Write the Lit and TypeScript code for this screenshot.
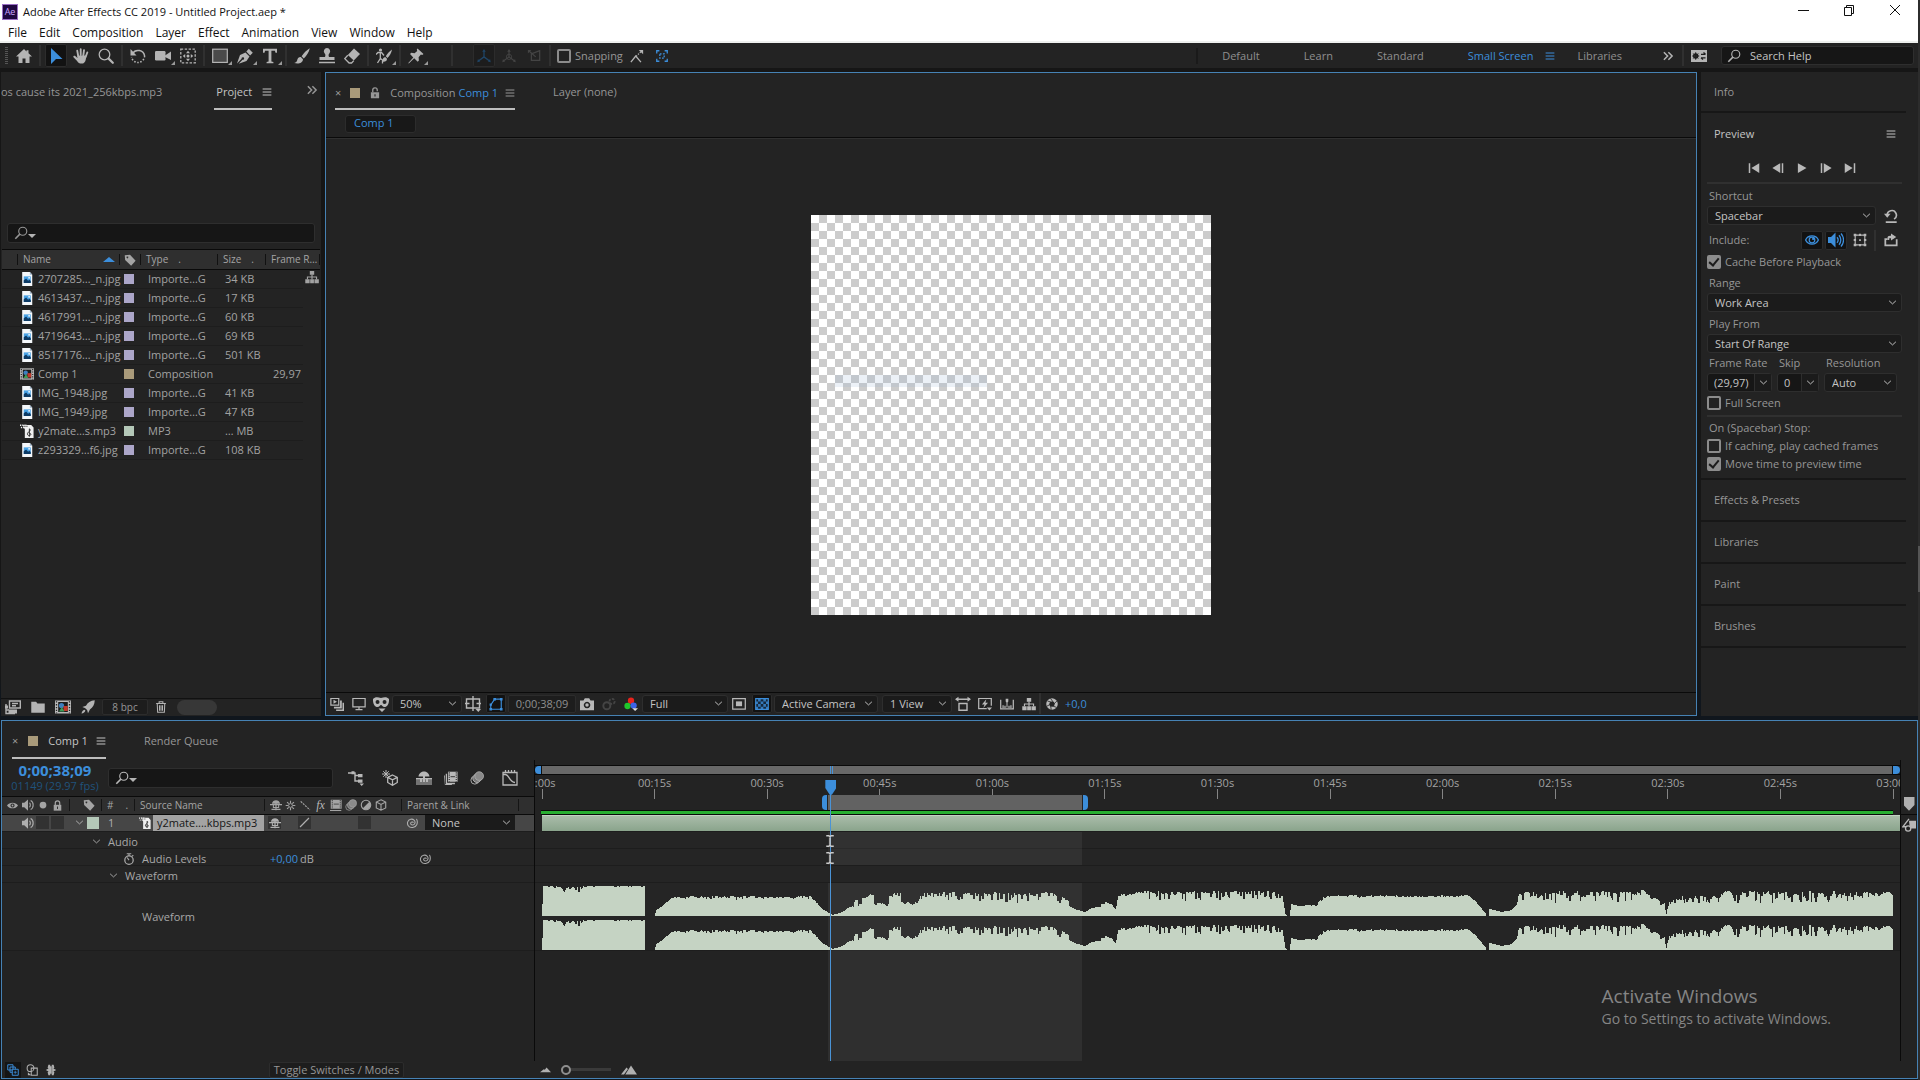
import { LitElement, html, css, svg, nothing } from "lit";
import type { TemplateResult, SVGTemplateResult } from "lit";
import { customElement, state } from "lit/decorators.js";
import { classMap } from "lit/directives/class-map.js";
import { styleMap } from "lit/directives/style-map.js";

/* ---------- icons, all on a 16 x 16 grid ---------- */

const ICONS: Record<string, SVGTemplateResult> = {
  home: svg`<path fill="currentColor" d="M8 1 0 8.600h2.500V15h4v-4.500h3V15h4V8.600H16L12.500 5.300V2.200h-2v1.200z"/>`,
  arrow: svg`<path fill="currentColor" d="M3 0v16l5-5h6.500z"/>`,
  hand: svg`<path fill="none" stroke="currentColor" stroke-width="1.900" stroke-linecap="round" d="M5.200 8 4.300 2.800M7.700 7V1.200M10.300 7.500 11 2.200M12.600 9l1.700-4.500"/><path fill="currentColor" d="M4.200 7.400h9.300l-.7 4c-.5 2.700-1.900 4.200-4.300 4.200-2 0-3.300-.8-4.400-2.600L.5 9.200c-.7-1.200.8-2.100 1.700-1.200l2.300 2z"/>`,
  zoom: svg`<circle cx="6.500" cy="6.500" r="5.300" fill="none" stroke="currentColor" stroke-width="1.300"/><path stroke="currentColor" stroke-width="2.200" stroke-linecap="round" d="m10.600 10.600 4.200 4.200"/>`,
  rotate: svg`<path fill="none" stroke="currentColor" stroke-width="1.500" d="M2.500 5.500A6.600 6.600 0 0 1 14.600 8"/><path fill="none" stroke="currentColor" stroke-width="1.500" stroke-dasharray="1.500 1.600" d="M14.600 8A6.600 6.600 0 0 1 1.500 9"/><path fill="currentColor" d="M.5 1v6.500h6z"/>`,
  camera: svg`<rect x="0" y="3" width="10.500" height="9.500" rx="1.200" fill="currentColor"/><path fill="currentColor" d="m10 7.500 6-4v8.500l-6-3z"/>`,
  panBehind: svg`<rect x=".8" y="1.200" width="14.400" height="13.600" fill="none" stroke="currentColor" stroke-width="1.300" stroke-dasharray="2.400 1.500"/><path fill="currentColor" d="m8 2.800 2 2.400H6zM8 13.200l2-2.400H6zM2.800 8l2.400-2v4zM13.200 8l-2.400-2v4z"/><circle cx="8" cy="8" r="1.500" fill="currentColor"/>`,
  rect: svg`<rect x=".7" y="1.200" width="14.600" height="13.200" fill="#4a4a4a" stroke="currentColor" stroke-width="1.200"/>`,
  pen: svg`<path fill="currentColor" d="M0 15.500 3 7l5.500-2.500 4 4L9.500 13l-7.800 2.700 3.800-4a1.300 1.300 0 1 0-.9-.9zM9.300 3.600 11.800.8l4 4-2.700 2.600z"/>`,
  type: svg`<path fill="currentColor" d="M1 .8h14v4h-1.500l-.6-2H9.400v10.600l2 .5V15.200H4.600v-1.300l2-.5V2.800H3.100l-.6 2H1z"/>`,
  brush: svg`<path fill="currentColor" d="M15.800.3c-3.500 2-6 4.700-8.200 8l2.200 2.200C12.700 7.800 14.900 4.300 15.800.3zM6.800 9c-2.600.1-3.300 1.700-3.700 3.400-.3 1.200-1 2-2.900 2.500 3.900 1.200 8.600.3 8.800-3.700z"/>`,
  stamp: svg`<path fill="currentColor" d="M8 0a3.200 3.200 0 0 1 2.300 5.400c-.9 1-.9 2-.3 3.600h5.500v3H.500V9H6c.6-1.600.6-2.600-.3-3.600A3.200 3.200 0 0 1 8 0zM0 13.700h16v1.500H0z"/>`,
  eraser: svg`<path fill="currentColor" d="M10 .5 16 6 9.800 12.600 3.800 7z"/><path fill="none" stroke="currentColor" stroke-width="1.300" d="M3.800 7.300.8 10.600l4.300 4.400H7.600l2.200-2.400"/>`,
  roto: svg`<circle cx="4.500" cy="2" r="1.600" fill="currentColor"/><path fill="none" stroke="currentColor" stroke-width="1.300" d="M0 6.500 2 4.500h3.500L8 7.500M4.300 5v5.500L1.500 15M4.500 10.500l2 1.500v3.500"/><path fill="currentColor" d="M16 1.500c-2.600 1.800-4.500 4-6.200 6.800l1.700 1.700c2.200-2.200 3.900-5 4.500-8.500zM9.200 9c-1.800.4-2.200 1.400-2.400 2.600-.2.900-.2 1.400-1 2 2.700.6 5.200.1 5.200-2.800z"/>`,
  pin: svg`<path fill="currentColor" d="M9.500.5 15.500 6l-1.300 1-1.300-.4-2.300 2.600.3 3.300-1.200 1.200-3.500-3.400L.8 15.600.3 15l5-5.600L2 6l1.300-1.200 3.300.4L9.200 2.900 8.800 1.500z"/>`,
  axis: svg`<path fill="none" stroke="currentColor" stroke-width="1.500" d="M8 2v7M8 9l-6 4.500M8 9l6 4.500"/><path fill="currentColor" d="m8 0 2 3H6zM.3 15l.8-3.500 2.400 2.700zM15.700 15l-.8-3.500-2.400 2.700z"/>`,
  axisWorld: svg`<path fill="none" stroke="currentColor" stroke-width="1.400" d="M8 2v7M8 9l-6 4.500M8 9l6 4.500"/><circle cx="8" cy="9" r="3" fill="none" stroke="currentColor"/><path fill="currentColor" d="m8 0 2 3H6zM.3 15l.8-3.500 2.400 2.700zM15.700 15l-.8-3.500-2.400 2.700z"/>`,
  axisView: svg`<path fill="none" stroke="currentColor" stroke-width="1.400" d="M5 5.500 14.500 2v11H5zM2 2l8 7"/><path fill="currentColor" d="M1 1h4L1 5z"/>`,
  snap: svg`<path fill="none" stroke="currentColor" stroke-width="1.500" d="m1 15 5.500-7 6 7"/><path fill="none" stroke="currentColor" stroke-width="1.500" stroke-dasharray="1.500 1.500" d="M7 8.500 13 2.500"/><path fill="currentColor" d="M10 1h5v5z"/>`,
  snapBox: svg`<path fill="none" stroke="currentColor" stroke-width="1.500" d="M2 5V2h3M11 2h3v3M14 11v3h-3M5 14H2v-3"/><path fill="none" stroke="currentColor" stroke-width="1.500" stroke-dasharray="2 1.500" d="M5.500 5.500h5v5h-5z"/>`,
  menu: svg`<path stroke="currentColor" stroke-width="1.200" d="M3 4.500h10M3 8h10M3 11.500h10"/>`,
  more: svg`<path fill="none" stroke="currentColor" stroke-width="2" d="m2.500 3 5 5-5 5M8.500 3l5 5-5 5"/>`,
  sync: svg`<rect x="0" y="2" width="16" height="12" fill="currentColor"/><circle cx="4.700" cy="8" r="1.900" fill="none" stroke="#1d1d1d" stroke-width="1.600"/><path stroke="#1d1d1d" stroke-width="1" d="M4.700 4.300v7.400M1.200 8h7M2.300 5.500l4.900 5M7.200 5.500l-4.900 5"/><path fill="none" stroke="#1d1d1d" stroke-width="1.200" d="M10 6.300h4.500M12.500 4.500l2 1.800M14.500 9.800H10M12 11.600l-2-1.800"/>`,
  search: svg`<circle cx="10" cy="6" r="4.600" fill="none" stroke="currentColor" stroke-width="1.300"/><path stroke="currentColor" stroke-width="1.800" d="m6.700 9.300-5.200 5.200"/>`,
  lockOpen: svg`<path fill="currentColor" d="M2.500 7h11v8h-11z"/><path fill="none" stroke="currentColor" stroke-width="1.800" d="M5 7V4.500a3 3 0 0 1 6-.5v1.500"/><path stroke="#232323" stroke-width="1.500" d="M8 9.500v3"/>`,
  lock: svg`<path fill="currentColor" d="M2.500 7h11v8.500h-11z"/><path fill="none" stroke="currentColor" stroke-width="1.800" d="M4.800 7.500V4.500a3.200 3.200 0 0 1 6.400 0v3"/><path stroke="#2f2f2f" stroke-width="1.500" d="M8 9.500v3.500"/>`,
  tag: svg`<path fill="currentColor" fill-rule="evenodd" d="M1 1.500 8 1l7.500 8-6 6.500L1.500 8zM4.500 3.300a1.200 1.200 0 1 0 .1 0z"/>`,
  flow: svg`<path fill="currentColor" d="M5.500 1h5v4.300h-5zM.3 10.500h5V15h-5zM5.900 10.500h4.300V15H5.900zM10.800 10.500h5V15h-5z"/><path fill="none" stroke="currentColor" stroke-width="1.300" d="M8 5v5.500M2.800 10.500V8h10.400v2.500"/>`,
  jpg: svg`<path fill="#f4f7fa" d="M2.500 0h8.800l2.700 3v13H2.500z"/><path fill="#9fb4c8" d="M11.300 0v3H14z"/><path fill="#4aa3e6" d="M4.300 5h8v7.500h-8z"/><path fill="#0d3b66" d="M4.300 12.500V9.500l2.700-2 2.300 2.400 1.300-1 1.700 1.400v2.200z"/><circle cx="10.400" cy="6.700" r="1" fill="#fff"/>`,
  mp3: svg`<path fill="#f0f0f0" d="M2.500 1h10.300L15.500 4v12h-10V6z"/><path stroke="#eee" stroke-width="1.600" stroke-dasharray="1.500 1" d="M0 1.500h8M1 4h5"/><path fill="none" stroke="#222" stroke-width="1" d="M10.700 14.500V5.500c2 1 .5 2.700-1 3.800-2.200 1.700-1.200 4.200 1.100 4 2.500-.4 1.700-3.300-.3-2.800"/><path stroke="#222" stroke-width="1.200" stroke-dasharray="1 1.200" d="M2 2.700h7"/>`,
  comp: svg`<path fill="#b8b8b8" d="M0 1.500h16v13H0z"/><path stroke="#222" stroke-width="1.300" stroke-dasharray="1.300 1.500" d="M1.500 2.300v12M14.500 2.300v12"/><path fill="#1c1c1c" d="M3.200 3h9.600v10H3.200z"/><circle cx="6.500" cy="6.500" r="2.600" fill="#3d7fbf"/><path fill="#c0392b" d="M8.500 7h4.300v5H8.500z"/><path fill="#3f9d58" d="M4 12.500 6.800 8l2.700 4.500z"/>`,
  interpret: svg`<path fill="none" stroke="currentColor" stroke-width="1.400" d="M4.500 2h10.800v7H4.500zM1 5v9.500h9M1 11h3M7 4.500h6M7 6.700h4"/><path fill="currentColor" d="M0 6.500h3v3H0zM3.500 10.500H12v4H3.500z"/>`,
  folder: svg`<path fill="currentColor" d="M.3 2h5.500l1.500 2H15.700v10.500H.3z"/>`,
  rocket: svg`<path fill="currentColor" d="M15.700.3c-5 .3-8 2.700-10 6.200L1.500 8l3 1 2.500 2.500 1 3.500 2.200-4.200c3.300-2.200 5.400-5.500 5.500-10.500zM4 11c-2 .3-2.800 2-3.500 4.500C3 15 4.500 14 5 12z"/>`,
  trash: svg`<path fill="none" stroke="currentColor" stroke-width="1.400" d="M1.500 3.200h13M5.500 3V1h5v2M3 3.500l.5 11.500h9L13 3.500M6 5.500v7.500M8 5.500v7.500M10 5.500v7.500"/>`,
  stack: svg`<path fill="none" stroke="currentColor" stroke-width="1.400" d="M1 1.700h9v7.600H1z"/><path fill="currentColor" d="m4 3.200 4 2.300-4 2.300zM11.500 4h2v9h-9v-2h7zM14.300 6.500H16V16H7v-1.700h7.300z"/>`,
  monitor: svg`<path fill="none" stroke="currentColor" stroke-width="1.400" d="M1 1.700h14v9.500H1zM8 11v3M4 14.500h8"/>`,
  goggles: svg`<path fill="currentColor" fill-rule="evenodd" d="M0 3c2-2.500 5-2 8-1 3-1 6-1.500 8 1 .3 4-1.500 8-4.500 8C9.500 11 9 9 8 9s-1.500 2-3.500 2C1.500 11-.3 7 0 3zm4.500 1A2 2 0 1 0 4.600 8a2 2 0 0 0-.1-4zm7 0a2 2 0 1 0 .1 4 2 2 0 0 0-.1-4zM5.500 12.500h7L9 16z"/>`,
  guides: svg`<path fill="none" stroke="currentColor" stroke-width="1.400" d="M1.500 3h13v9h-13zM8 0v15M0 7.500h4.500M11.500 7.500H16"/><path fill="currentColor" d="M10.500 13h5.500l-2.700 3z"/>`,
  mask: svg`<path fill="none" stroke="currentColor" stroke-width="1.300" d="M2 14V9l4.500-6.500H14V14z"/><path fill="currentColor" d="M.5 12.500h3v3h-3zM12.500 12.500h3v3h-3zM12.500 1h3v3h-3zM5 1h3v3H5zM.7 7.500h2.600v2.600H.7z"/>`,
  snapshot: svg`<path fill="currentColor" fill-rule="evenodd" d="M0 4h4l1.500-2.500h5L12 4h4v11H0zm8 1.500a3.700 3.700 0 1 0 .1 0z"/><circle cx="8" cy="9.200" r="2" fill="currentColor"/>`,
  ghost: svg`<circle cx="5.500" cy="10" r="4" fill="none" stroke="currentColor" stroke-width="2.200"/><circle cx="11.500" cy="5" r="3" fill="none" stroke="currentColor" stroke-width="2" stroke-dasharray="3 1.500"/>`,
  rgb: svg`<circle cx="8" cy="4.300" r="3.600" fill="#e8231c"/><circle cx="4" cy="10.300" r="3.600" fill="#20c52b"/><circle cx="11" cy="9.800" r="3.600" fill="#3c62e8"/><path fill="#ddd" d="M9.500 12.800H16L12.700 16z"/>`,
  region: svg`<path fill="none" stroke="currentColor" stroke-width="1.400" d="M.8 1.800h14.400v12H.8z"/><path fill="currentColor" d="M4.500 5h7v5.500h-7z"/>`,
  transparency: svg`<path fill="#16283c" stroke="currentColor" stroke-width="1.300" d="M.8 1.800h14.400v12.400H.8z"/><path fill="currentColor" opacity=".8" d="M3.500 2h3v3h-3zM9.500 2h3v3h-3zM1 5h2.500v3H1zM6.500 5h3v3h-3zM12.500 5H15v3h-2.500zM3.500 8h3v3h-3zM9.500 8h3v3h-3zM1 11h2.500v3H1zM6.500 11h3v3h-3zM12.500 11H15v3h-2.500z"/>`,
  pixelAspect: svg`<path fill="none" stroke="currentColor" stroke-width="1.400" d="M1 3.200h14M4 7.500h8v6.800H4z"/><path fill="currentColor" d="M3.500.7v5L0 3.200zM12.500.7v5L16 3.200z"/>`,
  fastPreview: svg`<path fill="none" stroke="currentColor" stroke-width="1.400" d="M10 13.300H.8V1.700h14.400V10"/><path fill="currentColor" d="M9.500 2.500 4.500 8.500h3L6 12.500l5.500-6h-3zM10 12h6l-3 3.500z"/>`,
  timelineBtn: svg`<path fill="none" stroke="currentColor" stroke-width="1.400" d="M.8 3v10.500h14.400V3M3.500 12.500v-3M5.700 12.500V10M10.300 12.500V10M12.500 12.500v-3"/><path fill="currentColor" d="M6.500 2h3v3L8 7 6.500 5zM7.400 6h1.200v6H7.400z"/>`,
  aperture: svg`<circle cx="8" cy="8" r="5.600" fill="none" stroke="currentColor" stroke-width="4.200"/><path stroke="#232323" stroke-width="1.100" d="M6 .5 10 6M14.500 4 10 8.500M14 12.500 8.500 10.500M7 15.500 6 10M1 11l5.500-3M2 4l5 1.500"/>`,
  chevron: svg`<path fill="none" stroke="currentColor" stroke-width="1.700" d="m2 5 6 5.500L14 5"/>`,
  skipStart: svg`<path fill="currentColor" d="M1 1.500h2v13H1zM15 1.500v13L4.500 8z"/>`,
  stepBack: svg`<path fill="currentColor" d="M13 1.500h2v13h-2zM11 1.500v13L.5 8z"/>`,
  play: svg`<path fill="currentColor" d="M2.500 1.500v13L14 8z"/>`,
  stepFwd: svg`<path fill="currentColor" d="M1 1.500h2v13H1zM5 1.500v13L15.500 8z"/>`,
  skipEnd: svg`<path fill="currentColor" d="M13 1.500h2v13h-2zM1 1.500v13L11.500 8z"/>`,
  reset: svg`<path fill="none" stroke="currentColor" stroke-width="1.900" d="M3.700 7.500A5.200 5.200 0 1 1 11.500 11.500M2 15h12.500"/><path fill="currentColor" d="M0 5.500h7.500L3.700 10z"/>`,
  eyeBlue: svg`<path fill="none" stroke="currentColor" stroke-width="1.500" d="M.7 8C3.500 1.800 12.500 1.800 15.300 8 12.500 14.200 3.500 14.200.7 8z"/><circle cx="8" cy="8" r="3.200" fill="none" stroke="currentColor" stroke-width="1.400"/><circle cx="9.300" cy="6.800" r="1.300" fill="currentColor"/>`,
  sound: svg`<path fill="currentColor" d="M0 5h3l4.500-4.500v15L3 11H0z"/><path fill="none" stroke="currentColor" stroke-width="1.300" d="M9 5.300c1.300 1.500 1.300 3.900 0 5.400M11 3.300c2.400 2.700 2.400 6.700 0 9.400M13 1.500c3.400 3.700 3.400 9.300 0 13"/>`,
  overlays: svg`<path fill="none" stroke="currentColor" stroke-width="1.300" d="M2.500 2.500h11v11h-11z"/><path fill="currentColor" d="M.8.8h3v3h-3zM12.200.8h3v3h-3zM.8 12.200h3v3h-3zM12.200 12.200h3v3h-3zM6.800.8h2.400v2.700H6.800zM6.800 12.500h2.400v2.700H6.800zM.8 6.800h2.700v2.400H.8zM12.500 6.800h2.700v2.400h-2.700zM7 7h2v2H7z"/>`,
  loop: svg`<path fill="none" stroke="currentColor" stroke-width="2" d="M4 7H1.500v7h13V7"/><path fill="currentColor" d="M4 8V5.500c0-1.600 1-2.500 3-2.500h1V.5L14 4.500 8 8.500V6H6v2z"/>`,
  miniFlow: svg`<path fill="none" stroke="currentColor" stroke-width="1.400" d="M0 3h7v8h4M7 5.500h4"/><path fill="currentColor" d="M3.500 1.200h3v3h-3zM10 4h4.500v3.300H10zM10 9.500h4.500v3.300H10zM11.500 13.500H16L13.700 16z"/>`,
  draft3d: svg`<path stroke="currentColor" stroke-width="1" d="M4 0v8M0 4h8M1.200 1.200l5.600 5.600M6.800 1.200 1.200 6.800"/><path fill="none" stroke="currentColor" stroke-width="1.300" d="m10.500 5 4.800 2.300v5.200l-4.800 2.800-4.800-2.800V7.300zM5.700 7.300l4.800 2.500 4.800-2.500M10.500 9.800v5.500"/>`,
  shy: svg`<path fill="currentColor" d="M2.500 6.300C3 2.800 5.500 1.500 8 1.500s5 1.300 5.500 4.800zM7.200 6h1.600v9H7.200z"/><path fill="none" stroke="currentColor" stroke-width="1.400" d="M0 7.500h16M2 13.800h12M4.500 7.500v3.700h7V7.500"/>`,
  shyMaster: svg`<path fill="currentColor" opacity=".55" d="M0 9h16v6H0z"/><path fill="currentColor" d="M2.500 6.500C3 3 5.500 1.500 8 1.500s5 1.500 5.500 5zM7 6h2v6H7zM0 8h16v1.300H0zM4 9h2v3H4zM10 9h2v3h-2z"/>`,
  frameBlend: svg`<path fill="currentColor" d="M4.500.8h11v11.500h-11z"/><path fill="currentColor" d="M2 3h1.500v10.500h9V15H2zM0 5h1v11H9v-.8H.8z"/><path stroke="#232323" stroke-width="1.200" stroke-dasharray="1.300 1.200" d="M6 1.500v10.500M14 1.500v10.500"/><path stroke="#232323" stroke-width="1" d="M7.500 6.500h5"/>`,
  motionBlur: svg`<circle cx="5.500" cy="10.500" r="4.500" fill="none" stroke="currentColor"/><circle cx="8" cy="8.300" r="4.800" fill="#777" stroke="currentColor"/><circle cx="10.500" cy="5.800" r="5" fill="#8a8a8a" stroke="currentColor" stroke-width=".8"/>`,
  graph: svg`<path fill="none" stroke="currentColor" stroke-width="1.300" d="M1 2.500h14v12.500H1zM3.500 0v3M6.500 0v3M9.500 0v3M12.500 0v3M1.500 4.500h2c4 .5 3.500 7.500 9.500 8"/>`,
  eye: svg`<path fill="currentColor" fill-rule="evenodd" d="M0 8C3.500 2.500 12.500 2.500 16 8 12.500 13.500 3.500 13.500 0 8zm8-3a3 3 0 1 0 .1 0z"/><circle cx="8" cy="8" r="1.300" fill="currentColor"/>`,
  speaker: svg`<path fill="currentColor" d="M0 5h3l5-4.500v15L3 11H0z"/><path fill="none" stroke="currentColor" stroke-width="1.500" d="M10 5c1.500 1.500 1.500 4.500 0 6M11.500 2c4.500 2 4.500 10 0 12"/>`,
  dot: svg`<circle cx="8" cy="8" r="4.500" fill="currentColor"/>`,
  sun: svg`<circle cx="8" cy="8" r="2.800" fill="none" stroke="currentColor" stroke-width="1.400"/><path stroke="currentColor" stroke-width="1.600" d="M8 1v3.500M8 11.500V15M1 8h3.500M11.500 8H15M3 3l2.400 2.400M10.600 10.600 13 13M13 3l-2.400 2.400M5.400 10.600 3 13"/>`,
  quality: svg`<path fill="none" stroke="currentColor" stroke-width="1.600" stroke-dasharray="3 1.400" d="m1 2 13.500 12.500"/>`,
  qualityBest: svg`<path stroke="currentColor" stroke-width="1.700" d="M1.500 14.500 14.500 1.500"/>`,
  film: svg`<path fill="currentColor" d="M1 1h14.500v12H1zM0 14.500h15V16H0z"/><path stroke="#2f2f2f" stroke-width="1.300" stroke-dasharray="1.500 1.300" d="M3 1.500v11.500M13.700 1.500v11.500"/><path stroke="#2f2f2f" d="M5 6.800h6.800"/>`,
  adjust: svg`<circle cx="8" cy="8" r="6.300" fill="none" stroke="currentColor" stroke-width="1.500"/><path fill="currentColor" d="M12.500 3.500a6.300 6.300 0 0 1-9 9z"/>`,
  cube: svg`<path fill="none" stroke="currentColor" stroke-width="1.500" d="m8 1 6.300 3v8L8 15l-6.300-3V4zM1.700 4 8 7.300 14.300 4M8 7.300V15"/>`,
  spiral: svg`<path fill="none" stroke="currentColor" stroke-width="1.400" d="M9.700 7.800c-.3-2-3.700-1.500-3.500.9.200 2.600 4.600 2.700 5.600-.2C13 4.900 9.700 2.200 6.200 3 2.200 4 .8 8.500 3 11.700c2.600 3.700 9.600 3 11.500-1.700.9-2.500.8-5-.5-7.500"/>`,
  stopwatch: svg`<circle cx="8" cy="9.500" r="5.600" fill="none" stroke="currentColor" stroke-width="1.700"/><path fill="none" stroke="currentColor" stroke-width="1.500" d="M8 4V1.500M5 1h6M12 4.500l1.700-1.800M8 9.500 5.500 6"/>`,
  layersPane: svg`<path fill="none" stroke="currentColor" stroke-width="1.300" d="M1 1h7v7H1zM4 4h7v7H4z"/><path fill="#151515" stroke="currentColor" stroke-width="1.300" d="M7 7h8v8H7z"/><path stroke="currentColor" d="M11 9v4M9 11h4"/>`,
  modesPane: svg`<circle cx="6" cy="5.500" r="4.500" fill="none" stroke="currentColor" stroke-width="1.400"/><path fill="none" stroke="currentColor" stroke-width="1.400" d="M7 5.500h8V15H7z"/><path fill="currentColor" d="M2.500 11 7 15H2.500z"/>`,
  stretchPane: svg`<path fill="currentColor" d="M4.500 1H7v14H4.500l-1-4 1.200-1L1 8l3.700-2-1.200-1zM11.500 1H9v14h2.500l1-4-1.200-1L15 8l-3.700-2 1.200-1zM6.500 3h3v10h-3z"/>`,
  mountain: svg`<path fill="currentColor" d="m0 12 5.500-4.500L7 8.500 9.500 5 16 12z"/>`,
  mountains: svg`<path fill="currentColor" d="M0 12.500 5.500 5.500 7 7 3 12.500zM4.300 12.500 10 3.500l6 9z"/>`,
  ibeam: svg`<path fill="none" stroke="#c9c9c9" stroke-width="2" d="M3 1h3.500L8 2.500 9.500 1H13M3 15h3.500L8 13.500 9.500 15H13M8 2v12"/>`,
  minimize: svg`<path stroke="currentColor" d="M3 8.500h11"/>`,
  restore: svg`<path fill="none" stroke="currentColor" d="M3.500 5.500h7v8h-7zM5.500 5V3.500h7v8H11"/>`,
  close: svg`<path stroke="currentColor" d="m3 3 10 10M13 3 3 13"/>`,
  compBin: svg`<path fill="currentColor" d="M8 3h8v9H9z"/><path fill="none" stroke="currentColor" stroke-width="1.500" d="M8 1 1 10h6"/><circle cx="7" cy="12" r="3" fill="#232323" stroke="currentColor" stroke-width="1.500"/>`,
};

const icon = (name: string, size = "i16"): TemplateResult =>
  html`<svg class="icon ${size}" viewBox="0 0 16 16" aria-hidden="true">${ICONS[name]}</svg>`;

/* ---------- data ---------- */

const MENUS = ["File", "Edit", "Composition", "Layer", "Effect", "Animation", "View", "Window", "Help"];

type Tool = { id: string; label: string; more?: boolean };
const TOOL_GROUPS: Tool[][] = [
  [{ id: "home", label: "Home" }],
  [
    { id: "arrow", label: "Selection tool" },
    { id: "hand", label: "Hand tool" },
    { id: "zoom", label: "Zoom tool" },
  ],
  [
    { id: "rotate", label: "Rotation tool" },
    { id: "camera", label: "Camera tool", more: true },
    { id: "panBehind", label: "Pan behind tool" },
  ],
  [
    { id: "rect", label: "Rectangle tool", more: true },
    { id: "pen", label: "Pen tool", more: true },
    { id: "type", label: "Type tool", more: true },
  ],
  [
    { id: "brush", label: "Brush tool" },
    { id: "stamp", label: "Clone stamp tool" },
    { id: "eraser", label: "Eraser tool" },
  ],
  [{ id: "roto", label: "Roto brush tool", more: true }],
  [{ id: "pin", label: "Puppet pin tool", more: true }],
];

type Item = { name: string; icon: string; tint: string; type: string; size?: string; rate?: string };
const jpg = (name: string, size: string): Item => ({
  name, icon: "jpg", tint: "lavender", type: "Importe…G", size,
});
const ITEMS: Item[] = [
  jpg("2707285…_n.jpg", "34 KB"),
  jpg("4613437…_n.jpg", "17 KB"),
  jpg("4617991…_n.jpg", "60 KB"),
  jpg("4719643…_n.jpg", "69 KB"),
  jpg("8517176…_n.jpg", "501 KB"),
  { name: "Comp 1", icon: "comp", tint: "sand", type: "Composition", rate: "29,97" },
  jpg("IMG_1948.jpg", "41 KB"),
  jpg("IMG_1949.jpg", "47 KB"),
  { name: "y2mate…s.mp3", icon: "mp3", tint: "seafoam", type: "MP3", size: "… MB" },
  jpg("z293329…f6.jpg", "108 KB"),
];

const TICKS = [
  "0:00s", "00:15s", "00:30s", "00:45s", "01:00s", "01:15s", "01:30s",
  "01:45s", "02:00s", "02:15s", "02:30s", "02:45s", "03:00s",
];
const pct = (n: number) => `${n}%`;
const PLAYHEAD = 21.4;
const WORK_START = 21.25;
const WORK_END = 40.05;

/* Loudness envelope: position, level, downward ripple, upward ripple. */
const ENVELOPE: [number, number, number, number][] = [
  [0, 12, 0, 0], [1, 30, 1, 0], [18, 30, 2, 0], [22, 29, 5, 0], [38, 29, 5, 0], [42, 30, 1, 0], [102, 30, 1, 0],
  [103, 0, 0, 0], [112, 0, 0, 0], [114, 6, 0, 0], [121, 11, 1, 0], [128, 18, 2, 0], [132, 19, 2, 1],
  [204, 19, 3, 1], [250, 19, 2, 1], [268, 20, 3, 1], [272, 16, 1, 0], [280, 7, 0, 0], [290, 1, 0, 0],
  [298, 3, 0, 0], [308, 9, 1, 1], [314, 11, 1, 6], [330, 12, 3, 12], [376, 13, 3, 11], [380, 23, 6, 0],
  [420, 23, 11, 1], [440, 23, 10, 1], [512, 23, 10, 1], [516, 17, 4, 3], [526, 13, 3, 5], [531, 8, 0, 0],
  [543, 3, 0, 1], [548, 7, 0, 2], [564, 11, 1, 3], [570, 11, 1, 2], [574, 7, 1, 2], [577, 20, 2, 2],
  [590, 22, 2, 1], [600, 24, 1, 1], [608, 24, 9, 1], [737, 25, 9, 0], [741, 20, 2, 0], [744, 2, 0, 0],
  [746, 0, 0, 0], [748, 0, 0, 0], [750, 11, 2, 2], [776, 11, 2, 2], [783, 20, 2, 1], [890, 20, 2, 1],
  [928, 20, 1, 1], [936, 13, 2, 0], [944, 3, 0, 0], [945, 0, 0, 0], [947, 0, 0, 0], [948, 7, 0, 0],
  [960, 4, 0, 0], [970, 5, 0, 1], [975, 10, 0, 1], [978, 23, 8, 2], [1000, 23, 11, 2], [1095, 24, 11, 2],
  [1104, 25, 1, 1], [1112, 18, 5, 0], [1116, 13, 3, 6], [1124, 13, 3, 5], [1126, 2, 0, 0], [1129, 17, 7, 3],
  [1178, 18, 7, 3], [1184, 25, 1, 0], [1192, 23, 10, 2], [1250, 24, 11, 1], [1290, 22, 11, 3],
  [1340, 24, 5, 1], [1349, 24, 1, 0], [1353, 20, 0, 0],
];
const LENGTH = 1353;

const noise = (n: number) => {
  const s = Math.sin(n * 127.1 + 11.7) * 43758.5453;
  return s - Math.floor(s);
};

function wavePath(base: number): string {
  let d = `M0 ${base}`;
  let k = 0;
  for (let x = 0; x < LENGTH; x += 1) {
    while (k < ENVELOPE.length - 2 && ENVELOPE[k + 1][0] <= x) k++;
    const [x0, l0, d0, u0] = ENVELOPE[k];
    const [x1, l1, d1, u1] = ENVELOPE[k + 1];
    const t = Math.min(1, (x - x0) / (x1 - x0));
    const level = l0 + (l1 - l0) * t;
    const down = d0 + (d1 - d0) * t;
    const up = u0 + (u1 - u0) * t;
    const burst = noise(Math.floor(x / 4) + 900);
    const rise = burst > 0.62 ? burst : 0.25 * burst;
    const h = Math.max(0, Math.round(level - down * Math.pow(noise(Math.floor(x / 1.5)), 2) + up * rise));
    d += `V${base - h}h1`;
  }
  return `${d}V${base}z`;
}
const WAVES = [wavePath(32), wavePath(66)];

/* ---------- styles ---------- */

const styles = css`
  :host {
    --bg: #232323;
    --well: #161616;
    --line: #0a0a0a;
    --text: #969696;
    --bright: #c4c4c4;
    --blue: #3c8edb;
    --edge: #4682b4;
    display: block;
    font-family: "Open Sans", "Noto Sans", sans-serif;
    font-size: 11px;
    line-height: 16px;
    color: var(--text);
  }
  * { box-sizing: border-box; }
  button, input, select {
    font: inherit;
    color: inherit;
    background: none;
    border: 0;
    padding: 0;
    margin: 0;
    border-radius: 0;
    outline: 0;
  }
  a { color: inherit; text-decoration: none; }
  h1, h2, p { margin: 0; padding: 0; font: inherit; }
  .icon { display: block; flex: none; }
  .i9 { width: 9px; height: 9px; }
  .i11 { width: 11px; height: 11px; }
  .i12 { width: 12px; height: 12px; }
  .i14 { width: 14px; height: 14px; }
  .i16 { width: 16px; height: 16px; }
  .blue { color: var(--blue); }

  .window {
    position: relative;
    min-height: 100vh;
    display: flex;
    flex-direction: column;
    background: var(--well);
    border-right: 2px solid #2c2c2c;
  }

  /* title and menu bar */
  .caption {
    background: #fff;
    color: #111;
    height: 43px;
    border-bottom: 2px solid #eef0ee;
    display: flex;
    justify-content: space-between;
    flex: none;
  }
  .title { display: flex; align-items: center; gap: 5px; padding: 3px 0 0 2px; height: 20px; }
  .logo {
    width: 16px;
    height: 16px;
    background: #1f0740;
    border: 1px solid #9a6fc4;
    color: #c9a2ff;
    font-size: 9px;
    line-height: 13px;
    text-align: center;
  }
  .menus { display: flex; gap: 12px; padding: 4px 0 0 8px; font-size: 12px; line-height: 18px; }
  .win-buttons { display: flex; gap: 30px; padding: 2px 15px 0 0; align-self: flex-start; }
  .win-buttons button { width: 16px; height: 16px; }

  /* tool bar */
  .tools { background: var(--bg); height: 25px; display: flex; align-items: center; gap: 3px; padding: 0 4px 0 5px; flex: none; color: #b4b4b4; }
  .grip { width: 3px; height: 17px; background: repeating-linear-gradient(#555 0 1px, transparent 1px 2px); margin-right: 2px; }
  .tool { width: 22px; height: 23px; display: grid; place-items: center; position: relative; border-radius: 2px; }
  .tool.on { background: #121212; box-shadow: inset 0 0 0 1px #2c2c2c; color: var(--blue); }
  .tool.more::after {
    content: "";
    position: absolute;
    right: -1px;
    bottom: 2px;
    border: 2px solid transparent;
    border-right-color: #9a9a9a;
    border-bottom-color: #9a9a9a;
  }
  .tool.dim { color: #444; }
  .tool.dim.on { color: #1f4567; background: #1d1d1d; }
  .sep { width: 4px; height: 21px; background: linear-gradient(90deg, transparent 25%, #303030 25% 75%, transparent 75%); flex: none; }
  .sep.wide { margin: 0 16px 0 20px; }
  .check { display: flex; align-items: center; gap: 4px; color: var(--text); }
  .tools .check { margin-left: 2px; }
  .check input {
    appearance: none;
    width: 14px;
    height: 14px;
    border: 2px solid #8c8c8c;
    border-radius: 2px;
    flex: none;
  }
  .check input:checked {
    background: #8c8c8c;
    display: grid;
    place-items: center;
  }
  .check input:checked::after {
    content: "";
    width: 4px;
    height: 8px;
    border: solid #1c1c1c;
    border-width: 0 2px 2px 0;
    rotate: 40deg;
    translate: 0 -1px;
  }
  .workspaces { margin-left: auto; display: flex; align-items: center; gap: 44px; color: #8f8f8f; border-left: 2px solid #1a1a1a; padding-left: 24px; padding-right: 4px; }
  .workspaces .current { display: flex; align-items: center; gap: 10px; color: var(--blue); margin-right: -24px; }
  .workspaces button { margin-left: -4px; color: #b4b4b4; }
  .help-search { width: 193px; height: 19px; display: flex; align-items: center; gap: 9px; background: var(--well); border: 1px solid #2e2e2e; border-radius: 3px; padding: 0 5px; margin-left: 8px; }
  .help-search input { width: 100%; min-width: 0; }
  ::placeholder { color: var(--bright); opacity: 1; }

  /* panels */
  .stack { flex: 1; display: flex; flex-direction: column; gap: 4px; padding-top: 4px; background: linear-gradient(#161616 60%, #10161d 62%); }
  .upper { flex: 645 1 0; display: grid; grid-template-columns: 321px minmax(0, 1fr) 217px; gap: 4px; }
  .panel { background: var(--bg); display: flex; flex-direction: column; min-width: 0; min-height: 0; }
  .active { border: 1px solid var(--edge); }
  .tabs { display: flex; align-items: flex-start; height: 43px; padding-top: 12px; flex: none; }
  .tab { display: flex; align-items: center; white-space: nowrap; }
  .tab.on { border-bottom: 2px solid #bdbdbd; height: 26px; padding-bottom: 8px; color: var(--bright); }
  .tab.on > .icon:last-child { margin: 0 -2px 0 -4px; }
  .x { color: #9a9a9a; }
  .swatch { width: 10px; height: 10px; background: #a99a7a; flex: none; }
  .swatch.lavender { background: #aca6c9; }
  .swatch.seafoam { background: #b4c8b8; }

  /* project */
  .project { margin-left: 1px; }
  .project .tabs { justify-content: space-between; padding-right: 3px; overflow: hidden; }
  .project .tab.on { gap: 12px; padding-left: 2px; margin-left: 52px; margin-right: auto; }
  .thumb-area { height: 108px; flex: none; }
  .field { display: flex; align-items: center; background: var(--well); border: 1px solid #2e2e2e; border-radius: 3px; height: 20px; padding: 0 6px; }
  .field input { flex: 1; min-width: 0; }
  .field .arrow { border: 4px solid transparent; border-top-color: #b4b4b4; border-bottom: 0; margin-top: 5px; }
  .project .field { margin: 0 6px 6px 6px; flex: none; }
  .items { border-collapse: collapse; table-layout: fixed; width: 318px; margin-left: 1px; text-align: left; }
  .items th { background: #2f2f2f; height: 20px; border-top: 1px solid var(--line); border-bottom: 1px solid var(--line); font-size: 10px; font-weight: 400; padding: 0 0 0 5px; white-space: nowrap; color: #a4a4a4; }
  .items th:nth-child(2) { padding-left: 4px; }
  .items .head { display: flex; align-items: center; justify-content: space-between; height: 11px; line-height: 11px; border-right: 1px solid #111; padding-right: 4px; }
  .items .head.dotted { justify-content: flex-start; gap: 10px; }
  .items th:first-child .head { margin-left: 10px; border-left: 1px solid #111; padding-left: 5px; }
  .items td { height: 19px; border-bottom: 1px solid #1d1d1d; padding: 0 0 0 7px; white-space: nowrap; color: #a2a2a2; }
  .items td:nth-child(2) { padding-left: 4px; }
  .items td:last-child { border: 0; padding: 0 0 0 2px; }
  .items .file { display: flex; align-items: center; gap: 4px; padding-left: 11px; }
  .sort { border: 6px solid transparent; border-bottom: 5px solid var(--blue); border-top: 0; }
  .grow { flex: 1; }
  .project-foot { display: flex; align-items: center; height: 18px; gap: 10px; padding-left: 4px; flex: none; color: #b4b4b4; border-top: 1px solid #111; }
  .chip { background: #1d1d1d; border: 1px solid #2c2c2c; border-radius: 2px; height: 16px; line-height: 14px; color: var(--text); }
  .chip.depth { width: 46px; font-size: 10px; margin: 0 -3px; }
  .hscroll { width: 40px; height: 15px; border-radius: 8px; background: #373737; }

  /* composition */
  .comp .tabs { height: 39px; padding: 11px 0 0 9px; }
  .comp .tab.on { gap: 9px; color: var(--text); padding-bottom: 7px; }
  .comp .tab .name { display: flex; gap: 3px; }
  .comp .tabs .other { margin-left: 38px; }
  .crumbs { height: 26px; padding: 3px 0 0 19px; border-bottom: 1px solid var(--line); flex: none; box-shadow: 0 1px #303030; }
  .crumbs button { display: block; width: 71px; height: 18px; background: #181818; border: 1px solid #2c2c2c; border-radius: 3px; text-align: left; padding: 0 0 2px 8px; color: var(--blue); line-height: 14px; }
  .viewer { flex: 1; display: grid; place-items: center; min-height: 0; }
  .frame { width: 400px; height: 400px; background: repeating-conic-gradient(#ccc 0 25%, #fff 0 50%) 0 0 / 16px 16px; padding: 160px 0 0 24px; }
  .frame i { display: block; width: 152px; height: 12px; background: rgba(150, 180, 210, .18); }
  .comp-foot { height: 23px; border-top: 1px solid var(--line); display: flex; align-items: center; gap: 4px; padding-left: 2px; color: #b8b8b8; flex: none; }
  .comp-foot .tool { height: 19px; width: 18px; }
  .comp-foot .tool.on { width: 20px; }
  .comp-foot .time { width: 68px; height: 18px; line-height: 16px; color: #8f8f8f; margin: 0 -2px; }
  .comp-foot .pick { margin: 0 -2px; }
  .comp-foot .pick + .pick { margin-left: 2px; }
  .comp-foot .sep { margin: 0 -3px 0 -4px; }
  .pick { display: grid; align-items: center; background: #1b1b1b; border: 1px solid #2e2e2e; border-radius: 3px; height: 18px; min-width: 0; color: var(--bright); }
  .pick select, .pick .icon { grid-area: 1 / 1; }
  .pick select { appearance: none; width: 100%; padding-left: 7px; height: 16px; line-height: 16px; }
  .pick select option { background: #1b1b1b; }
  .pick .icon { justify-self: end; margin-right: 4px; pointer-events: none; }
  .w-zoom { width: 70px; }
  .w-res { width: 86px; }
  .w-cam { width: 104px; }
  .w-view { width: 70px; }

  /* right column */
  .side { padding-right: 12px; }
  .side .title-row { height: 42px; padding: 0 8px 0 13px; display: flex; align-items: center; justify-content: space-between; border-bottom: 2px solid #171717; color: var(--text); flex: none; width: 100%; text-align: left; }
  .side .title-row.first { height: 41px; }
  .side .title-row.open { border: 0; color: var(--bright); }
  .preview { padding: 0 4px 5px 6px; border-bottom: 2px solid #171717; display: flex; flex-direction: column; }
  .transport { display: flex; justify-content: center; gap: 12px; height: 29px; padding: 7px 6px 0 0; border-bottom: 2px solid #303030; color: #b8b8b8; }
  .transport button { width: 12px; height: 12px; }
  .preview .lab { height: 22px; line-height: 18px; padding: 3px 0 0 2px; }
  .preview .pick { height: 19px; }
  .preview .row { display: flex; align-items: center; }
  .preview .row.end { gap: 8px; }
  .preview .row.end .pick { width: 169px; }
  .preview .row.end button { color: #b8b8b8; }
  .include { height: 30px; gap: 2px; padding: 0 4px 0 2px; color: #b8b8b8; }
  .include span { margin-right: auto; color: var(--text); }
  .include .tool { height: 19px; }
  .include .sep { margin-right: 5px; }
  .preview .check { height: 18px; }
  .preview .check.first { height: 14px; margin-bottom: 2px; }
  .preview .check.full { height: 22px; margin-bottom: 1px; }
  .trio { display: grid; grid-template-columns: 65px 42px 73px; column-gap: 5px; }
  .preview .trio .lab { height: 20px; padding-top: 1px; }
  .combo { display: flex; background: var(--well); border: 1px solid #2e2e2e; border-radius: 3px; height: 19px; color: var(--bright); }
  .combo input { min-width: 0; flex: 1; padding-left: 6px; width: 10px; }
  .combo button { width: 17px; border-left: 1px solid #2e2e2e; display: grid; place-items: center; background: #1b1b1b; }
  .rule { height: 2px; background: #303030; }
  .preview p.lab { height: 20px; padding-top: 2px; }

  /* timeline */
  .timeline { flex: 358 1 0; margin: 0 0 1px 1px; }
  .timeline .tabs { height: 39px; padding-left: 10px; }
  .timeline .tab.on { gap: 10px; }
  .timeline .other { margin-left: 38px; }
  .timebody { flex: 1; display: grid; grid-template-columns: 533px minmax(0, 1fr) 17px; min-height: 300px; }
  .outline { border-right: 1px solid var(--line); display: flex; flex-direction: column; }
  .controls { display: flex; height: 36px; align-items: center; color: #b8b8b8; flex: none; }
  .stamp { width: 106px; text-align: center; color: var(--blue); flex: none; }
  .stamp strong { display: block; font-size: 15px; line-height: 16px; }
  .stamp span { display: block; color: #20527c; line-height: 15px; }
  .controls .field { width: 225px; margin-right: 15px; }
  .controls .set { display: flex; gap: 18px; align-items: center; }
  .controls .set .near { margin-left: -6px; }
  .cols { display: grid; grid-template-columns: 67px 32px 33px 130px 137px minmax(0, 1fr); align-items: center; }
  .cols.head { height: 19px; background: #2f2f2f; border-top: 1px solid var(--line); border-bottom: 1px solid var(--line); color: #a4a4a4; flex: none; font-size: 10px; }
  .cols.head > * { height: 12px; line-height: 12px; display: flex; align-items: center; border-left: 1px solid #151515; padding-left: 5px; }
  .cols.head > :first-child { border: 0; }
  .cols.head > .label { padding-left: 13px; }
  .cols.head > :last-child { margin-right: 15px; border-right: 1px solid #151515; }
  .cols > .cells { display: flex; align-items: center; padding-left: 3px; }
  .cells > * { width: 15px; display: grid; place-items: center; flex: none; height: 14px; }
  .cells > .box { width: 13px; height: 13px; background: #323232; margin: 0 1px; }
  .fx { font: italic 12px/12px "Liberation Serif", serif; color: #b8b8b8; }
  .hash { gap: 12px; }
  .layer { height: 17px; background: #464646; border-bottom: 1px solid #1d1d1d; flex: none; color: #b0b0b0; }
  .layer .lead { display: flex; align-items: center; gap: 3px; padding-left: 6px; }
  .layer .swatch { width: 12px; height: 12px; }
  .layer .num { padding-left: 7px; }
  .layer .src { display: flex; gap: 2px; align-items: center; padding-left: 5px; height: 16px; }
  .layer .src b { flex: 1; background: #a3a3a3; color: #161616; font-weight: 400; padding-left: 4px; height: 16px; line-height: 16px; white-space: nowrap; }
  .layer .parent { display: flex; gap: 7px; align-items: center; padding-left: 5px; }
  .layer .pick { width: 90px; height: 15px; border: 0; border-radius: 0; }
  .layer .pick select { height: 15px; line-height: 15px; }
  .prop { display: grid; grid-template-columns: 262px 137px minmax(0, 1fr); height: 17px; border-bottom: 1px solid #1d1d1d; align-items: center; flex: none; color: #a8a8a8; background: #252525; padding-top: 2px; }
  .prop > span { display: flex; align-items: center; gap: 7px; }
  .prop .l1 { padding-left: 90px; }
  .prop .l2 { padding-left: 107px; }
  .prop .l3 { padding-left: 121px; }
  .prop .l4 { padding-left: 140px; }
  .prop .val { padding-left: 6px; gap: 2px; }
  .prop .whip { padding-left: 18px; }
  .prop.tall { height: 68px; }
  .time-foot { display: flex; align-items: center; height: 17px; flex: none; padding-left: 3px; color: #b0b0b0; }
  .time-foot .on { background: #151515; }
  .time-foot button { padding: 0 2px; height: 16px; }
  .time-foot .chip { width: 135px; margin-left: 207px; padding: 0; }
  .foot-left { display: flex; align-items: center; gap: 3px; width: 532px; }
  .zoomer { display: flex; align-items: center; gap: 10px; padding-left: 3px; }
  .zoomer input { appearance: none; width: 50px; height: 11px; background: linear-gradient(#3a3a3a, #3a3a3a) center / 100% 3px no-repeat; }
  .zoomer input::-webkit-slider-thumb { appearance: none; width: 10px; height: 10px; border: 2px solid #8f8f8f; border-radius: 50%; background: var(--bg); }

  /* graph side of the timeline */
  .graph { display: flex; flex-direction: column; position: relative; overflow: hidden; }
  .nav { height: 10px; margin-top: 5px; border: solid var(--line); border-width: 1px 0; display: flex; flex: none; }
  .nav i { background: var(--blue); width: 6px; border-radius: 5px 0 0 5px; }
  .nav i:last-child { border-radius: 0 5px 5px 0; width: 7px; }
  .nav b { flex: 1; background: #686868; border: solid #111; border-width: 0 1px; }
  .ruler { height: 35px; margin: 0 7px 0 7px; position: relative; flex: none; }
  .tick { position: absolute; top: 0; width: 60px; margin-left: -30px; display: grid; justify-items: center; color: #a2a2a2; }
  .tick::after { content: ""; width: 1px; height: 10px; background: #858585; margin-top: -2px; }
  .green { height: 5px; border: solid var(--line); border-width: 1px 0; background: #28ae31; margin: 0 7px 0 6px; flex: none; }
  .clip { height: 17px; margin-left: 7px; border-bottom: 1px solid #1d1d1d; background: linear-gradient(#c3d2c3 0 1px, #a9bca9 1px, #8aa48c); flex: none; }
  .lane { height: 17px; border-bottom: 1px solid #1d1d1d; background: #252525; flex: none; }
  .lane.tall { height: 68px; padding: 1px 7px 0 7px; }
  .lane svg { display: block; width: 100%; height: 66px; position: relative; z-index: 1; }
  .over { position: absolute; inset: 0 7px 0 6px; pointer-events: none; }
  .work { position: absolute; background: #626262; top: 35px; height: 15px; }
  .work::before, .work::after { content: ""; position: absolute; top: 0; bottom: 0; width: 5px; background: var(--blue); }
  .work::before { left: -6px; border-radius: 4px 0 0 4px; }
  .work::after { right: -6px; border-radius: 0 4px 4px 0; }
  .shade { position: absolute; background: rgba(255, 255, 255, .06); }
  .shade.a { top: 72px; height: 33px; }
  .shade.b { top: 123px; bottom: 0; }
  .head-line { position: absolute; top: 20px; bottom: 0; width: 1px; background: #4a93d6; z-index: 2; }
  .head-line .grab { position: absolute; left: -5px; top: 0; width: 11px; height: 15px; background: var(--blue); clip-path: polygon(0 0, 100% 0, 100% 55%, 60% 100%, 40% 100%, 0 55%); }
  .head-line .icon { position: absolute; left: -6px; top: 55px; }
  .head-line .icon + .icon { top: 72px; }
  .mark { position: absolute; top: 6px; width: 3px; height: 8px; border: solid #4a93d6; border-width: 0 1px; }
  .gutter { border-left: 1px solid var(--line); background: var(--bg); display: flex; flex-direction: column; align-items: center; color: #b8b8b8; }
  .gutter .marker { width: 11px; height: 14px; margin-top: 37px; background: #b0b0b0; clip-path: polygon(0 0, 100% 0, 100% 60%, 50% 100%, 0 60%); }
  .gutter hr { width: 100%; margin: 3px 0; border: 0; height: 1px; background: var(--line); flex: none; }

  .notice { position: absolute; right: 87px; bottom: 51px; color: #858585; line-height: 20px; pointer-events: none; }
  .notice strong { display: block; font-weight: 400; font-size: 19px; line-height: 26px; }
  .notice p { font-size: 14px; }
  .scroll-mark { position: absolute; right: -2px; top: 546px; width: 2px; height: 46px; background: #555; }
`;

/* ---------- component ---------- */

@customElement("app-root")
export class AppRoot extends LitElement {
  static styles = styles;

  @state() private tool = "arrow";

  private pick(id: string, label: string, value: string, cls = "") {
    return html`<div class="pick ${cls}">
      <select id=${id} aria-label=${label}><option>${value}</option></select>
      ${icon("chevron", "i9")}
    </div>`;
  }

  private iconButton(name: string, label: string, cls = "tool", size = "i14") {
    return html`<button class=${cls} aria-label=${label}>${icon(name, size)}</button>`;
  }

  private check(label: string, on = false, cls = "") {
    return html`<label class="check ${cls}"><input type="checkbox" .checked=${on} />${label}</label>`;
  }

  private caption() {
    return html`<header class="caption">
      <div>
        <h1 class="title"><span class="logo">Ae</span>Adobe After Effects CC 2019 - Untitled Project.aep *</h1>
        <nav class="menus">${MENUS.map((m) => html`<a href="#${m.toLowerCase()}">${m}</a>`)}</nav>
      </div>
      <div class="win-buttons">
        ${this.iconButton("minimize", "Minimize", "", "i16")}
        ${this.iconButton("restore", "Restore", "", "i16")}
        ${this.iconButton("close", "Close", "", "i16")}
      </div>
    </header>`;
  }

  private toolbar() {
    return html`<div class="tools">
      <i class="grip"></i>
      ${TOOL_GROUPS.map((group, i) => html`
        ${i ? html`<i class="sep"></i>` : nothing}
        ${group.map((t) => html`<button
          class=${classMap({ tool: true, on: t.id === this.tool, more: !!t.more })}
          aria-label=${t.label}
          @click=${() => (this.tool = t.id)}>${icon(t.id)}</button>`)}
      `)}
      <i class="sep wide"></i>
      ${this.iconButton("axis", "Local axis", "tool dim on")}
      ${this.iconButton("axisWorld", "World axis", "tool dim")}
      ${this.iconButton("axisView", "View axis", "tool dim")}
      <i class="sep"></i>
      ${this.check("Snapping")}
      ${this.iconButton("snap", "Snap to edges")}
      ${this.iconButton("snapBox", "Snap to features", "tool blue")}
      <nav class="workspaces">
        <a href="#default">Default</a>
        <a href="#learn">Learn</a>
        <a href="#standard">Standard</a>
        <a class="current" href="#small">Small Screen ${icon("menu", "i14")}</a>
        <a href="#libraries">Libraries</a>
        ${this.iconButton("more", "More workspaces", "", "i12")}
      </nav>
      <i class="sep"></i>
      ${this.iconButton("sync", "Sync settings", "tool", "i16")}
      <div class="help-search">${icon("search", "i14")}<input aria-label="Search Help" placeholder="Search Help" /></div>
    </div>`;
  }

  private project() {
    return html`<section class="panel project">
      <div class="tabs">
        <a class="tab" href="#mp3">os cause its 2021_256kbps.mp3</a>
        <a class="tab on" href="#project">Project ${icon("menu", "i14")}</a>
        ${this.iconButton("more", "More panels", "", "i12")}
      </div>
      <div class="thumb-area"></div>
      <div class="field">${icon("search", "i14")}<i class="arrow"></i><input aria-label="Search project" /></div>
      <table class="items">
        <colgroup>
          <col style="width:118px" /><col style="width:21px" /><col style="width:77px" />
          <col style="width:48px" /><col style="width:37px" /><col />
        </colgroup>
        <thead>
          <tr>
            <th><div class="head">Name <i class="sort"></i></div></th>
            <th><div class="head">${icon("tag", "i12")}</div></th>
            <th><div class="head dotted">Type <span>.</span></div></th>
            <th><div class="head dotted">Size <span>.</span></div></th>
            <th colspan="2"><div class="head">Frame R…</div></th>
          </tr>
        </thead>
        <tbody>
          ${ITEMS.map((it, i) => html`<tr>
            <td><span class="file">${icon(it.icon, "i14")}${it.name}</span></td>
            <td><div class="swatch ${it.tint}"></div></td>
            <td>${it.type}</td>
            <td>${it.size ?? ""}</td>
            <td>${it.rate ?? ""}</td>
            <td>${i ? nothing : this.iconButton("flow", "Project flowchart", "")}</td>
          </tr>`)}
        </tbody>
      </table>
      <div class="grow"></div>
      <div class="project-foot">
        ${this.iconButton("interpret", "Interpret footage", "", "i16")}
        ${this.iconButton("folder", "New folder", "")}
        ${this.iconButton("comp", "New composition", "", "i16")}
        ${this.iconButton("rocket", "Project settings", "")}
        <button class="chip depth">8 bpc</button>
        ${this.iconButton("trash", "Delete", "", "i12")}
        <div class="hscroll"></div>
      </div>
    </section>`;
  }

  private composition() {
    return html`<section class="panel comp active">
      <div class="tabs">
        <div class="tab on">
          <button class="x" aria-label="Close tab">×</button>
          <i class="swatch"></i>
          ${icon("lockOpen", "i12")}
          <span class="name">Composition <span class="blue">Comp 1</span></span>
          ${icon("menu", "i14")}
        </div>
        <a class="tab other" href="#layer">Layer (none)</a>
      </div>
      <div class="crumbs"><button>Comp 1</button></div>
      <div class="viewer"><div class="frame"><i></i></div></div>
      <div class="comp-foot">
        ${this.iconButton("stack", "Always preview this view")}
        ${this.iconButton("monitor", "Primary viewer")}
        ${this.iconButton("goggles", "View options", "tool", "i16")}
        ${this.pick("mag", "Magnification", "50%", "w-zoom")}
        ${this.iconButton("guides", "Grid and guides", "tool", "i16")}
        ${this.iconButton("mask", "Toggle mask visibility", "tool on")}
        <button class="chip time">0;00;38;09</button>
        ${this.iconButton("snapshot", "Take snapshot")}
        ${this.iconButton("ghost", "Show snapshot", "tool dim")}
        ${this.iconButton("rgb", "Channels")}
        ${this.pick("res", "Resolution", "Full", "w-res")}
        ${this.iconButton("region", "Region of interest")}
        ${this.iconButton("transparency", "Toggle transparency grid", "tool on")}
        ${this.pick("cam", "3D view", "Active Camera", "w-cam")}
        ${this.pick("views", "View layout", "1 View", "w-view")}
        ${this.iconButton("pixelAspect", "Pixel aspect correction", "tool", "i16")}
        ${this.iconButton("fastPreview", "Fast previews")}
        ${this.iconButton("timelineBtn", "Timeline")}
        ${this.iconButton("flow", "Flowchart")}
        <i class="sep"></i>
        ${this.iconButton("aperture", "Reset exposure", "tool", "i12")}
        <button class="blue">+0,0</button>
      </div>
    </section>`;
  }

  private side() {
    return html`<aside class="panel side">
      <button class="title-row first">Info</button>
      <div class="title-row open"><h2>Preview</h2>${this.iconButton("menu", "Panel menu", "")}</div>
      <div class="preview">
        <div class="transport">
          ${this.iconButton("skipStart", "First frame", "", "i12")}
          ${this.iconButton("stepBack", "Previous frame", "", "i12")}
          ${this.iconButton("play", "Play", "", "i12")}
          ${this.iconButton("stepFwd", "Next frame", "", "i12")}
          ${this.iconButton("skipEnd", "Last frame", "", "i12")}
        </div>
        <label class="lab" for="shortcut">Shortcut</label>
        <div class="row end">
          ${this.pick("shortcut", "Shortcut", "Spacebar")}
          ${this.iconButton("reset", "Reset", "")}
        </div>
        <div class="row include">
          <span>Include:</span>
          ${this.iconButton("eyeBlue", "Video", "tool on")}
          ${this.iconButton("sound", "Audio", "tool on", "i16")}
          ${this.iconButton("overlays", "Overlays")}
          <i class="sep"></i>
          ${this.iconButton("loop", "Loop", "")}
        </div>
        ${this.check("Cache Before Playback", true, "first")}
        <label class="lab" for="range">Range</label>
        ${this.pick("range", "Range", "Work Area")}
        <label class="lab" for="from">Play From</label>
        ${this.pick("from", "Play From", "Start Of Range")}
        <div class="trio">
          <label class="lab" for="rate">Frame Rate</label>
          <label class="lab" for="skip">Skip</label>
          <label class="lab" for="quality">Resolution</label>
          <div class="combo"><input id="rate" .value=${"(29,97)"} />${this.iconButton("chevron", "Frame rates", "", "i9")}</div>
          <div class="combo"><input id="skip" .value=${"0"} />${this.iconButton("chevron", "Skip values", "", "i9")}</div>
          ${this.pick("quality", "Resolution", "Auto")}
        </div>
        ${this.check("Full Screen", false, "full")}
        <div class="rule"></div>
        <p class="lab">On (Spacebar) Stop:</p>
        ${this.check("If caching, play cached frames")}
        ${this.check("Move time to preview time", true)}
      </div>
      ${["Effects & Presets", "Libraries", "Paint", "Brushes"].map(
        (t) => html`<button class="title-row">${t}</button>`,
      )}
    </aside>`;
  }

  private outline() {
    return html`<div class="outline">
      <div class="controls">
        <div class="stamp"><strong>0;00;38;09</strong><span>01149 (29.97 fps)</span></div>
        <div class="field">${icon("search", "i14")}<i class="arrow"></i><input aria-label="Search layers" /></div>
        <div class="set">
          ${this.iconButton("miniFlow", "Mini-flowchart", "", "i16")}
          ${this.iconButton("draft3d", "Draft 3D", "", "i16")}
          ${this.iconButton("shyMaster", "Hide shy layers", "", "i16")}
          ${this.iconButton("frameBlend", "Frame blending", "near")}
          ${this.iconButton("motionBlur", "Motion blur", "near")}
          ${this.iconButton("graph", "Graph editor", "", "i16")}
        </div>
      </div>
      <div class="cols head">
        <div class="cells">
          <span>${icon("eye", "i11")}</span><span>${icon("speaker", "i12")}</span>
          <span>${icon("dot", "i12")}</span><span>${icon("lock", "i11")}</span>
        </div>
        <div class="label">${icon("tag", "i12")}</div>
        <div class="hash"><span>#</span><span>.</span></div>
        <div>Source Name</div>
        <div class="cells">
          <span>${icon("shy", "i12")}</span><span>${icon("sun", "i11")}</span>
          <span>${icon("quality", "i11")}</span><span class="fx">fx</span>
          <span>${icon("film", "i12")}</span><span>${icon("motionBlur", "i12")}</span>
          <span>${icon("adjust", "i12")}</span><span>${icon("cube", "i12")}</span>
        </div>
        <div>Parent &amp; Link</div>
      </div>
      <div class="cols layer">
        <div class="cells"><span></span><span>${icon("speaker", "i12")}</span><i class="box"></i><i class="box"></i></div>
        <div class="lead">${icon("chevron", "i9")}<i class="swatch seafoam"></i></div>
        <div class="num">1</div>
        <div class="src">${icon("mp3", "i12")}<b>y2mate....kbps.mp3</b></div>
        <div class="cells">
          <span class="box">${icon("shy", "i12")}</span><span></span>
          <span class="box">${icon("qualityBest", "i11")}</span><span></span><span></span><span></span>
          <i class="box"></i>
        </div>
        <div class="parent">${icon("spiral", "i12")}${this.pick("parent", "Parent", "None")}</div>
      </div>
      <div class="prop"><span class="l1">${icon("chevron", "i9")}Audio</span></div>
      <div class="prop">
        <span class="l3">${icon("stopwatch", "i12")}Audio Levels</span>
        <span class="val"><a class="blue" href="#level">+0,00</a>dB</span>
        <span class="whip">${icon("spiral", "i12")}</span>
      </div>
      <div class="prop"><span class="l2">${icon("chevron", "i9")}Waveform</span></div>
      <div class="prop tall"><span class="l4">Waveform</span></div>
      <div class="grow"></div>
    </div>`;
  }

  private graph() {
    const span = { left: pct(WORK_START), width: pct(WORK_END - WORK_START) };
    return html`<div class="graph">
      <div class="nav"><i></i><b></b><i></i></div>
      <div class="ruler">
        ${TICKS.map((t, i) => html`<div class="tick" style=${styleMap({ left: pct((i / 12) * 100) })}><span>${t}</span></div>`)}
      </div>
      <div class="green"></div>
      <div class="clip"></div>
      <div class="lane"></div>
      <div class="lane"></div>
      <div class="lane"></div>
      <div class="lane tall">
        <svg viewBox="0 0 ${LENGTH} 66" preserveAspectRatio="none" shape-rendering="crispEdges" fill="#c5d3c3" aria-label="Audio waveform">
          ${WAVES.map((d) => svg`<path d=${d} />`)}
        </svg>
      </div>
      <div class="over">
        <div class="mark" style=${styleMap({ left: pct(PLAYHEAD) })}></div>
        <div class="work" style=${styleMap(span)}></div>
        <div class="shade a" style=${styleMap(span)}></div>
        <div class="shade b" style=${styleMap(span)}></div>
        <div class="head-line" style=${styleMap({ left: pct(PLAYHEAD) })}>
          ${icon("ibeam", "i12")}${icon("ibeam", "i12")}<i class="grab"></i>
        </div>
      </div>
    </div>`;
  }

  private timeline() {
    return html`<section class="panel timeline active">
      <div class="tabs">
        <div class="tab on">
          <button class="x" aria-label="Close tab">×</button>
          <i class="swatch"></i>Comp 1 ${icon("menu", "i14")}
        </div>
        <a class="tab other" href="#queue">Render Queue</a>
      </div>
      <div class="timebody">
        ${this.outline()} ${this.graph()}
        <div class="gutter">
          <i class="marker"></i><hr />
          ${this.iconButton("compBin", "Comp button", "")}
        </div>
      </div>
      <div class="time-foot">
        <div class="foot-left">
          ${this.iconButton("layersPane", "Layer switches", "blue on", "i12")}
          ${this.iconButton("modesPane", "Transfer controls", "", "i12")}
          ${this.iconButton("stretchPane", "In and out", "", "i12")}
          <button class="chip">Toggle Switches / Modes</button>
        </div>
        <div class="zoomer">
          ${icon("mountain", "i11")}
          <input type="range" min="0" max="100" .value=${"0"} aria-label="Timeline zoom" />
          ${icon("mountains", "i16")}
        </div>
      </div>
    </section>`;
  }

  render() {
    return html`<div class="window">
      ${this.caption()} ${this.toolbar()}
      <main class="stack">
        <div class="upper">${this.project()} ${this.composition()} ${this.side()}</div>
        ${this.timeline()}
      </main>
      <i class="scroll-mark"></i>
      <div class="notice"><strong>Activate Windows</strong><p>Go to Settings to activate Windows.</p></div>
    </div>`;
  }
}
